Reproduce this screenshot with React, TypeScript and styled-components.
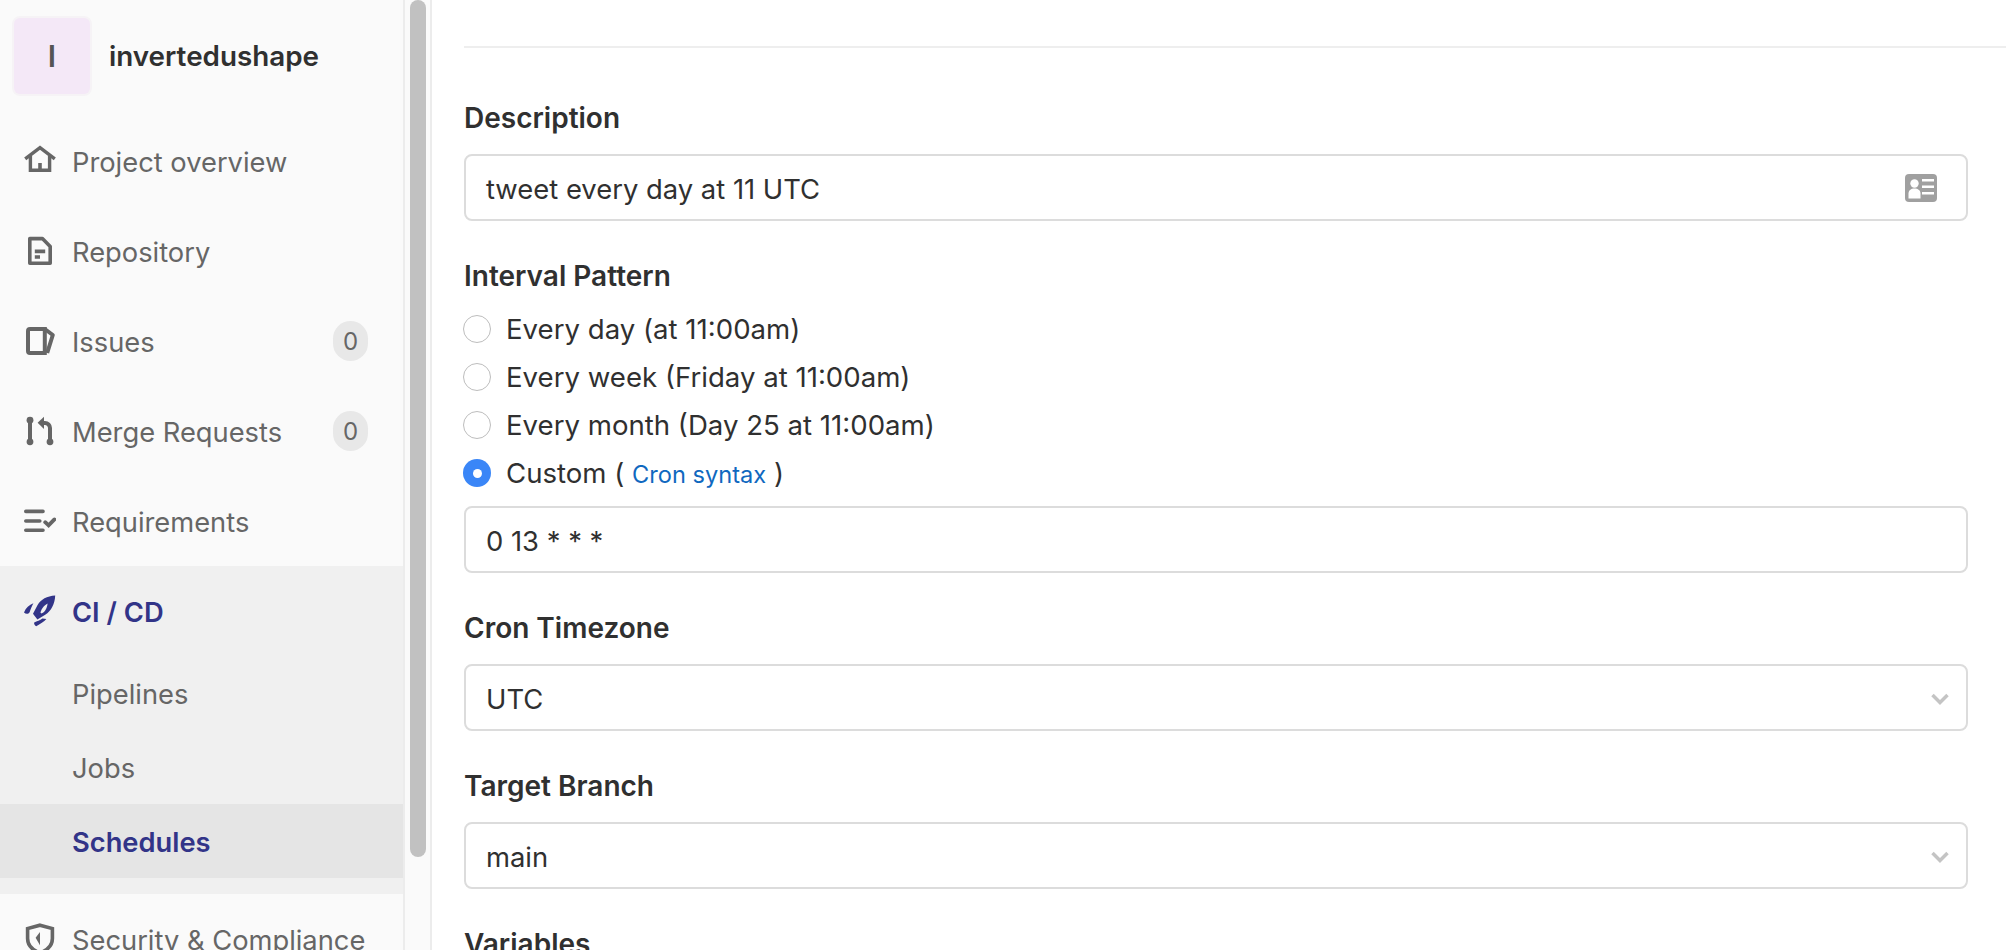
import React from "react";
import styled, { createGlobalStyle } from "styled-components";

const GlobalStyle = createGlobalStyle`
  html, body {
    margin: 0;
    height: 950px;
    overflow: hidden;
    background: #fff;
  }
  body {
    font-family: Inter, "Liberation Sans", sans-serif;
    color: #303030;
  }
  * {
    box-sizing: border-box;
  }
`;

const Page = styled.div`
  display: flex;
  width: 2006px;
  height: 950px;
  overflow: hidden;
`;

const Sidebar = styled.aside`
  flex: none;
  width: 403px;
  height: 950px;
  background: #fafafa;
  overflow: hidden;
`;

const ScrollTrack = styled.div`
  flex: none;
  width: 29px;
  height: 950px;
  padding: 0 5px;
  background: #fafafa;
  border-left: 2px solid #ececec;
  border-right: 2px solid #ececec;
`;

const ScrollThumb = styled.div`
  width: 16px;
  height: 857px;
  background: #c1c1c1;
  border-radius: 8px;
`;

const ProjectHeader = styled.div`
  display: flex;
  align-items: center;
  gap: 19px;
  height: 116px;
  padding: 0 0 5px 14px;
`;

const Avatar = styled.div`
  display: flex;
  flex: none;
  align-items: center;
  justify-content: center;
  width: 76px;
  height: 76px;
  background: #f4e8f7;
  border-radius: 6px;
  box-shadow: 0 0 0 2px #f6f3f6;
  font-size: 30px;
  font-weight: 600;
  color: #555;
`;

const ProjectName = styled.div`
  font-size: 27.8px;
  font-weight: 600;
  color: #303030;
`;

const NavRow = styled.div<{ $active?: boolean }>`
  display: flex;
  align-items: center;
  gap: 16px;
  height: 90px;
  padding: 0 35px 0 24px;
  font-size: 27.3px;
  font-weight: ${({ $active }) => ($active ? 600 : 400)};
  color: ${({ $active }) => ($active ? "#323488" : "#666")};
`;

const NavSection = styled.div`
  padding-bottom: 16px;
  background: #f0f0f0;
`;

const SubRow = styled.div<{ $active?: boolean }>`
  display: flex;
  align-items: center;
  height: 74px;
  padding: 2px 0 0 72px;
  font-size: 27.3px;
  font-weight: ${({ $active }) => ($active ? 600 : 400)};
  color: ${({ $active }) => ($active ? "#323488" : "#666")};
  background: ${({ $active }) => ($active ? "#e5e5e5" : "transparent")};
`;

const NavIcon = styled.svg`
  flex: none;
  width: 32px;
  height: 32px;
  color: inherit;
`;

const NavLabel = styled.span`
  flex: 1;
  padding-top: 2px;
  white-space: nowrap;
`;

const Badge = styled.span`
  display: flex;
  align-items: center;
  justify-content: center;
  width: 35px;
  height: 40px;
  border-radius: 20px;
  background: #e8e8e8;
  font-size: 24px;
  color: #666;
`;

const Main = styled.main`
  flex: 1;
  min-width: 0;
  padding-left: 32px;
`;

const TopRule = styled.div`
  height: 48px;
  border-bottom: 2px solid #eeeeee;
`;

const Form = styled.form`
  padding: 50px 38px 0 0;
`;

const Group = styled.div`
  margin-bottom: 35px;
`;

const Label = styled.div`
  font-size: 28px;
  line-height: 40px;
  font-weight: 600;
  color: #303030;
  margin-bottom: 16px;
`;

const Field = styled.div`
  position: relative;
  display: flex;
  align-items: center;
  height: 67px;
  padding: 2px 20px 0;
  border: 2px solid #dcdcdc;
  border-radius: 8px;
  background: #fff;
  font-size: 27.4px;
  color: #303030;
`;

const FieldIcon = styled.svg`
  position: absolute;
  right: 29px;
  top: 18px;
  width: 32px;
  height: 28px;
`;

const Chevron = styled.svg`
  position: absolute;
  right: 17px;
  top: 27px;
  width: 18px;
  height: 12px;
`;

const RadioList = styled.div`
  display: flex;
  flex-direction: column;
  margin-top: -7px;
  margin-bottom: 9px;
`;

const RadioRow = styled.div`
  display: flex;
  align-items: center;
  gap: 15px;
  height: 48px;
  margin-left: -1px;
  font-size: 27.6px;
  color: #303030;
`;

const RadioDot = styled.span<{ $checked?: boolean }>`
  display: flex;
  align-items: center;
  justify-content: center;
  flex: none;
  width: 28px;
  height: 28px;
  border-radius: 50%;
  background: ${({ $checked }) => ($checked ? "#3a86f7" : "#fff")};
  border: ${({ $checked }) => ($checked ? "none" : "1px solid #bdbdbd")};

  &::after {
    content: "";
    display: ${({ $checked }) => ($checked ? "block" : "none")};
    width: 9px;
    height: 9px;
    border-radius: 50%;
    background: #fff;
  }
`;

const CronLink = styled.a`
  color: #1068bf;
  font-size: 23.6px;
  text-decoration: none;
`;

const HomeIcon = () => (
  <NavIcon viewBox="0 0 16 16" fill="none" stroke="currentColor" strokeWidth="1.7">
    <path d="M.6 6.900 8 1.300l7.400 5.600" />
    <path d="M3.200 5.500v7.100h9.600V5.500" />
    <path d="M8 9v3.600" strokeWidth="1.800" />
  </NavIcon>
);

const DocIcon = () => (
  <NavIcon viewBox="0 0 16 16" fill="none" stroke="currentColor" strokeWidth="1.800">
    <path d="M2.900 1.800h6.300l3.900 3.900v8.400H2.900z" strokeLinejoin="round" />
    <path d="M5.400 8.200h5.200M5.400 11h2.600" />
  </NavIcon>
);

const IssuesIcon = () => (
  <NavIcon viewBox="0 0 16 16" fill="none" stroke="currentColor" strokeWidth="2">
    <path d="M3 2h7.400v12H3a1 1 0 0 1-1-1V3a1 1 0 0 1 1-1z" />
    <path d="M10.400 2l4 3-2.800 9" strokeLinejoin="round" />
  </NavIcon>
);

const MergeIcon = () => (
  <NavIcon viewBox="0 0 16 16" fill="none" stroke="currentColor" strokeWidth="2">
    <path d="M3 3v10" />
    <circle cx="3" cy="2.600" r="1.700" fill="currentColor" stroke="none" />
    <circle cx="3" cy="13.400" r="1.700" fill="currentColor" stroke="none" />
    <circle cx="13" cy="13.400" r="1.700" fill="currentColor" stroke="none" />
    <path d="M13 13V6.500a2.500 2.500 0 0 0-2.500-2.500H9" />
    <path d="M10 .9 6.800 3.900 10 7z" fill="currentColor" stroke="none" />
  </NavIcon>
);

const RequirementsIcon = () => (
  <NavIcon viewBox="0 0 16 16" fill="none" stroke="currentColor" strokeWidth="1.800" strokeLinecap="round">
    <path d="M.9 3.200h8.600M.9 8h7M.9 12.600h8.600" />
    <path d="M10.600 8.600l1.700 1.600 2.900-3" strokeWidth="1.900" />
  </NavIcon>
);

const RocketIcon = () => (
  <NavIcon viewBox="0 0 16 16" fill="currentColor">
    <path
      d="M15.600.2C11.500.5 8.400 2.100 6.800 5L4.500 9.400 6.700 12.200l3.900-2.300c3.100-2.100 4.800-5.400 5-9.700zM11.800 4.300C10.500 5 9.500 6 8.800 7.300L8.200 8.700l.6.6 1.200-.8C11 7.500 11.600 6 11.800 4.300z"
      fillRule="evenodd"
    />
    <path d="M4.700 4.100C2.600 4.900.9 6.300 0 8.700c.9.900 2.100.9 2.800-.1.500-1.600 1.100-2.900 1.900-4.500z" />
    <path d="M11.200 12c-1.200 1.300-3.100 2.500-5.100 3.600-.8-.3-1.200-1.100-1-1.800 1.300-.6 3-1.200 4.100-2z" />
  </NavIcon>
);

const ShieldIcon = () => (
  <NavIcon viewBox="0 0 16 16" fill="none" stroke="currentColor" strokeWidth="1.800">
    <path d="M8 1.100 14.200 2.800v5c0 3.300-2.500 5.800-6.200 7.200C4.300 13.600 1.800 11.100 1.800 7.800v-5z" />
    <path d="M8 4.500v6.600L5.800 7.400z" fill="currentColor" stroke="none" />
  </NavIcon>
);

const CardIcon = () => (
  <FieldIcon viewBox="0 0 32 28">
    <rect width="32" height="28" rx="4" fill="#a0a0a0" />
    <circle cx="9.500" cy="9.500" r="4.200" fill="#fff" />
    <path d="M3.500 24.500v-5c0-3 2.400-5 6-5s6 2 6 5v5z" fill="#fff" />
    <path d="M17 5h12v2.500H17zM17 11.500h12V14H17zM17 18h12v2.500H17z" fill="#fff" />
  </FieldIcon>
);

const SelectChevron = () => (
  <Chevron viewBox="0 0 18 12" fill="none" stroke="#c4c4c4" strokeWidth="3.500">
    <path d="M1.500 2 9 9.500 16.500 2" />
  </Chevron>
);

const App: React.FC = () => {
  return (
    <>
      <GlobalStyle />
      <Page>
        <Sidebar>
          <ProjectHeader>
            <Avatar>I</Avatar>
            <ProjectName>invertedushape</ProjectName>
          </ProjectHeader>
          <NavRow>
            <HomeIcon />
            <NavLabel>Project overview</NavLabel>
          </NavRow>
          <NavRow>
            <DocIcon />
            <NavLabel>Repository</NavLabel>
          </NavRow>
          <NavRow>
            <IssuesIcon />
            <NavLabel>Issues</NavLabel>
            <Badge>0</Badge>
          </NavRow>
          <NavRow>
            <MergeIcon />
            <NavLabel>Merge Requests</NavLabel>
            <Badge>0</Badge>
          </NavRow>
          <NavRow>
            <RequirementsIcon />
            <NavLabel>Requirements</NavLabel>
          </NavRow>
          <NavSection>
            <NavRow $active>
              <RocketIcon />
              <NavLabel>CI / CD</NavLabel>
            </NavRow>
            <SubRow>Pipelines</SubRow>
            <SubRow>Jobs</SubRow>
            <SubRow $active>Schedules</SubRow>
          </NavSection>
          <NavRow>
            <ShieldIcon />
            <NavLabel>Security &amp; Compliance</NavLabel>
          </NavRow>
        </Sidebar>
        <ScrollTrack>
          <ScrollThumb />
        </ScrollTrack>
        <Main>
          <TopRule />
          <Form>
            <Group>
              <Label>Description</Label>
              <Field>
                tweet every day at 11 UTC
                <CardIcon />
              </Field>
            </Group>
            <Group>
              <Label>Interval Pattern</Label>
              <RadioList>
                <RadioRow>
                  <RadioDot />
                  Every day (at 11:00am)
                </RadioRow>
                <RadioRow>
                  <RadioDot />
                  Every week (Friday at 11:00am)
                </RadioRow>
                <RadioRow>
                  <RadioDot />
                  Every month (Day 25 at 11:00am)
                </RadioRow>
                <RadioRow>
                  <RadioDot $checked />
                  <span>
                    Custom ( <CronLink href="#">Cron syntax</CronLink> )
                  </span>
                </RadioRow>
              </RadioList>
              <Field>0 13 * * *</Field>
            </Group>
            <Group>
              <Label>Cron Timezone</Label>
              <Field>
                UTC
                <SelectChevron />
              </Field>
            </Group>
            <Group>
              <Label>Target Branch</Label>
              <Field>
                main
                <SelectChevron />
              </Field>
            </Group>
            <Group>
              <Label>Variables</Label>
            </Group>
          </Form>
        </Main>
      </Page>
    </>
  );
};

export default App;
